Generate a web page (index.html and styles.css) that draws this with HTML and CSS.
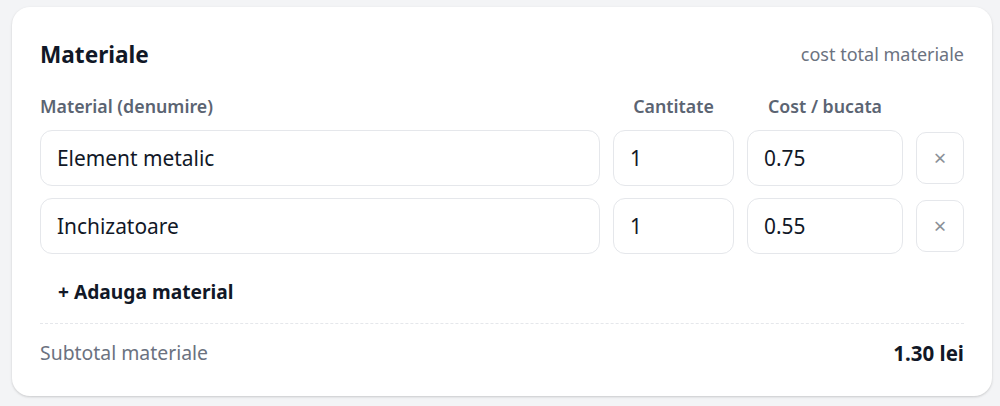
FILE: index.html
```html
<!DOCTYPE html>
<html lang="ro">
<head>
<meta charset="utf-8">
<link rel="stylesheet" href="styles.css">
</head>
<body>
<section class="card">
  <header class="card-head">
    <h2 class="title">Materiale</h2>
    <span class="hint">cost total materiale</span>
  </header>
  <div class="grid labels">
    <span class="lbl">Material (denumire)</span>
    <span class="lbl center">Cantitate</span>
    <span class="lbl center">Cost / bucata</span>
    <span></span>
  </div>
  <div class="grid row">
    <div class="field">Element metalic</div>
    <div class="field">1</div>
    <div class="field">0.75</div>
    <button class="remove">×</button>
  </div>
  <div class="grid row">
    <div class="field">Inchizatoare</div>
    <div class="field">1</div>
    <div class="field">0.55</div>
    <button class="remove">×</button>
  </div>
  <button class="add">+ Adauga material</button>
  <footer class="foot">
    <span class="sub">Subtotal materiale</span>
    <strong class="total">1.30 lei</strong>
  </footer>
</section>
</body>
</html>
```

FILE: styles.css
```css
* { box-sizing: border-box; }
html, body { margin: 0; }
body {
  background: #f3f4f6;
  font-family: "Noto Sans", "Open Sans", sans-serif;
  color: #111827;
  padding: 7px 8px 10px 12px;
}
.card {
  background: #fff;
  border-radius: 18px;
  box-shadow: 0 1px 3px rgba(0,0,0,0.12), 0 1px 2px rgba(0,0,0,0.06);
  padding: 30px 28px 28px 28px;
  height: 389px;
  width: 980px;
}
.card-head {
  display: flex;
  justify-content: space-between;
  align-items: center;
  height: 34px;
}
.title {
  margin: 0;
  font-size: 22.6px;
  font-weight: 700;
  color: #111827;
}
.hint {
  font-size: 18px;
  color: #6b7280;
}
.grid {
  display: grid;
  grid-template-columns: 560px 121px 156px 48px;
  column-gap: 13px;
  align-items: center;
}
.labels {
  margin-top: 23px;
  height: 24px;
}
.lbl {
  font-size: 17.8px;
  font-weight: 600;
  color: #5b6472;
}
.center { text-align: center; }
.row {
  margin-top: 12px;
  height: 56px;
}
.field {
  height: 56px;
  border: 1px solid #e5e7eb;
  border-radius: 12px;
  padding: 0 16px;
  display: flex;
  align-items: center;
  font-size: 20.9px;
  color: #111827;
}
.remove {
  width: 48px;
  height: 52px;
  border: 1px solid #e5e7eb;
  border-radius: 10px;
  background: #fff;
  color: #8b9097;
  font-size: 22px;
  font-family: inherit;
  padding: 0 0 2px;
}
.add {
  margin-top: 15px;
  background: none;
  border: 0;
  padding: 0 18px;
  height: 44px;
  font-family: inherit;
  font-size: 19.2px;
  font-weight: 700;
  color: #111827;
}
.foot {
  margin-top: 10px;
  border-top: 1px dashed #e5e7eb;
  display: flex;
  justify-content: space-between;
  align-items: center;
  height: 58px;
}
.sub { font-size: 19.4px; color: #6b7280; }
.total { font-size: 20.5px; font-weight: 700; color: #111827; }
```
